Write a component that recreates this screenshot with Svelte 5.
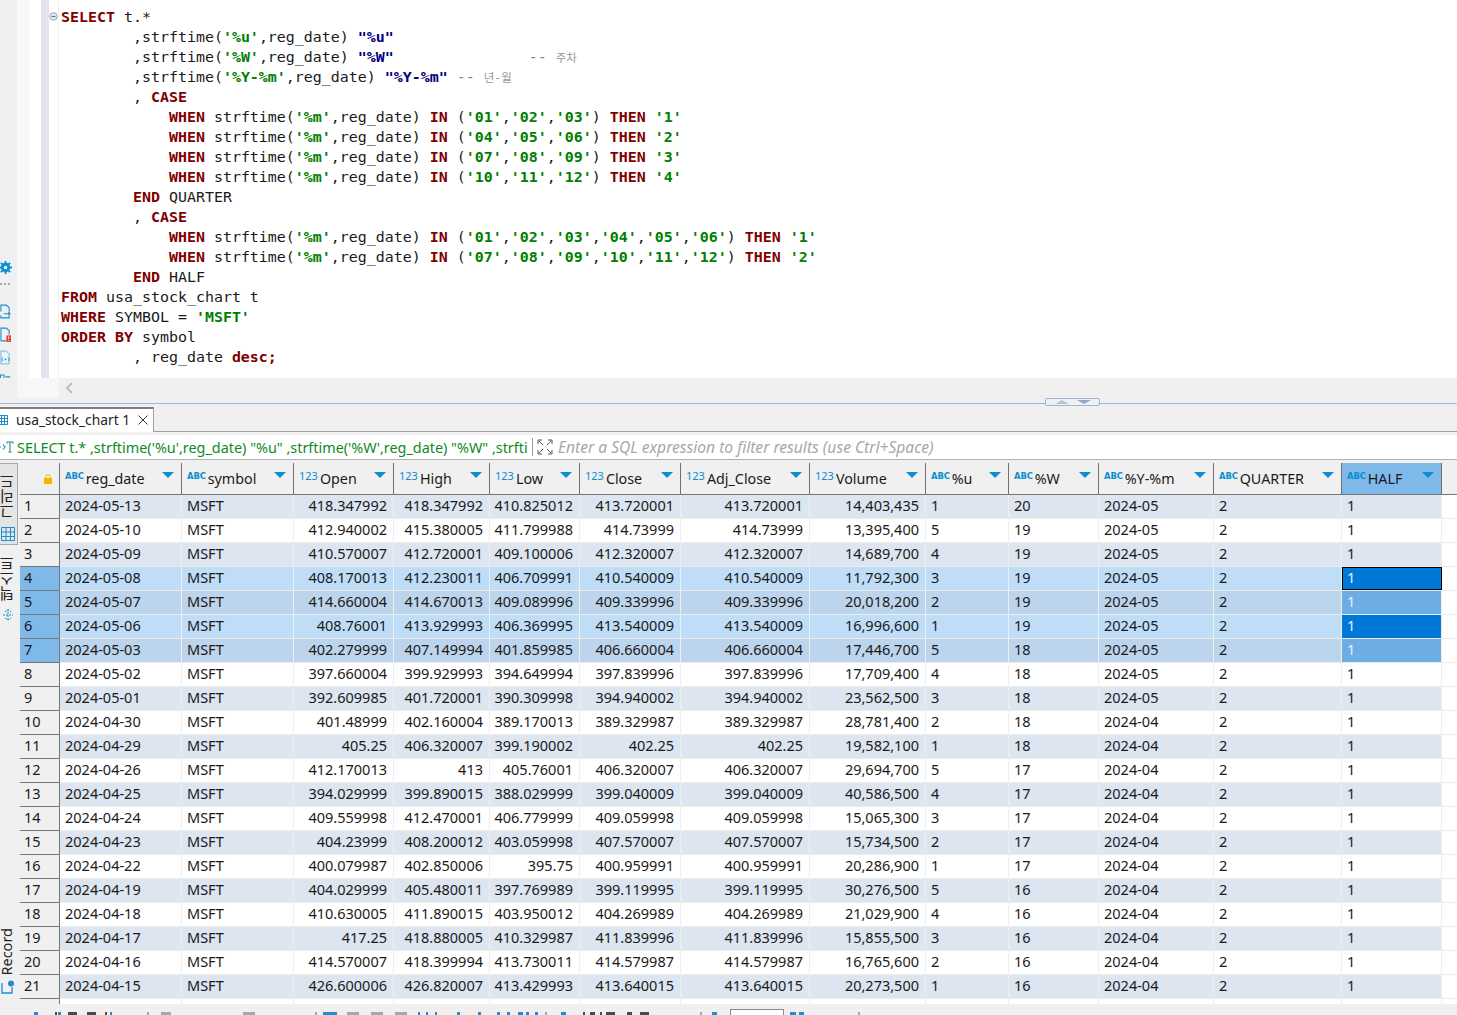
<script>
  const kw = (t) => ({ c: 'k', t });
  const st = (t) => ({ c: 's', t });
  const id = (t) => ({ c: 'i', t });
  const cm = (t) => ({ c: 'm', t });
  const ko = (t) => ({ c: 'ko', t });
  const tx = (t) => ({ c: 'n', t });

  const sf = (fmt, alias, rest) => [tx('        ,strftime('), st(`'${fmt}'`), tx(',reg_date) '), id(`"${alias}"`), ...(rest || [])];
  const when = (vals, n) => [
    tx('            '), kw('WHEN'), tx(' strftime('), st("'%m'"), tx(',reg_date) '), kw('IN'), tx(' ('),
    ...vals.flatMap((v, i) => (i ? [tx(','), st(`'${v}'`)] : [st(`'${v}'`)])),
    tx(') '), kw('THEN'), tx(' '), st(`'${n}'`)
  ];

  const code = [
    [kw('SELECT'), tx(' t.*')],
    sf('%u', '%u'),
    sf('%W', '%W', [tx('               '), cm('-- '), ko('주차')]),
    sf('%Y-%m', '%Y-%m', [tx(' '), cm('-- '), ko('년-월')]),
    [tx('        , '), kw('CASE')],
    when(['01', '02', '03'], 1),
    when(['04', '05', '06'], 2),
    when(['07', '08', '09'], 3),
    when(['10', '11', '12'], 4),
    [tx('        '), kw('END'), tx(' QUARTER')],
    [tx('        , '), kw('CASE')],
    when(['01', '02', '03', '04', '05', '06'], 1),
    when(['07', '08', '09', '10', '11', '12'], 2),
    [tx('        '), kw('END'), tx(' HALF')],
    [kw('FROM'), tx(' usa_stock_chart t')],
    [kw('WHERE'), tx(' SYMBOL = '), st("'MSFT'")],
    [kw('ORDER BY'), tx(' symbol')],
    [tx('        , reg_date '), kw('desc;')]
  ];

  const cols = [
    ['ABC', 'reg_date'], ['ABC', 'symbol'], ['123', 'Open'], ['123', 'High'], ['123', 'Low'],
    ['123', 'Close'], ['123', 'Adj_Close'], ['123', 'Volume'], ['ABC', '%u'], ['ABC', '%W'],
    ['ABC', '%Y-%m'], ['ABC', 'QUARTER'], ['ABC', 'HALF']
  ];

  const raw = `2024-05-13 418.347992 418.347992 410.825012 413.720001 413.720001 14,403,435 1 20 2024-05
2024-05-10 412.940002 415.380005 411.799988 414.73999 414.73999 13,395,400 5 19 2024-05
2024-05-09 410.570007 412.720001 409.100006 412.320007 412.320007 14,689,700 4 19 2024-05
2024-05-08 408.170013 412.230011 406.709991 410.540009 410.540009 11,792,300 3 19 2024-05
2024-05-07 414.660004 414.670013 409.089996 409.339996 409.339996 20,018,200 2 19 2024-05
2024-05-06 408.76001 413.929993 406.369995 413.540009 413.540009 16,996,600 1 19 2024-05
2024-05-03 402.279999 407.149994 401.859985 406.660004 406.660004 17,446,700 5 18 2024-05
2024-05-02 397.660004 399.929993 394.649994 397.839996 397.839996 17,709,400 4 18 2024-05
2024-05-01 392.609985 401.720001 390.309998 394.940002 394.940002 23,562,500 3 18 2024-05
2024-04-30 401.48999 402.160004 389.170013 389.329987 389.329987 28,781,400 2 18 2024-04
2024-04-29 405.25 406.320007 399.190002 402.25 402.25 19,582,100 1 18 2024-04
2024-04-26 412.170013 413 405.76001 406.320007 406.320007 29,694,700 5 17 2024-04
2024-04-25 394.029999 399.890015 388.029999 399.040009 399.040009 40,586,500 4 17 2024-04
2024-04-24 409.559998 412.470001 406.779999 409.059998 409.059998 15,065,300 3 17 2024-04
2024-04-23 404.23999 408.200012 403.059998 407.570007 407.570007 15,734,500 2 17 2024-04
2024-04-22 400.079987 402.850006 395.75 400.959991 400.959991 20,286,900 1 17 2024-04
2024-04-19 404.029999 405.480011 397.769989 399.119995 399.119995 30,276,500 5 16 2024-04
2024-04-18 410.630005 411.890015 403.950012 404.269989 404.269989 21,029,900 4 16 2024-04
2024-04-17 417.25 418.880005 410.329987 411.839996 411.839996 15,855,500 3 16 2024-04
2024-04-16 414.570007 418.399994 413.730011 414.579987 414.579987 16,765,600 2 16 2024-04
2024-04-15 426.600006 426.820007 413.429993 413.640015 413.640015 20,273,500 1 16 2024-04`;
  const rows = raw.split('\n').map((l) => l.split(' '));

  // tops of the bottom toolbar's icons, which the window cuts off: [x, width, colour]
  const B = '#1b8fd0', G = '#a8a8a8', D = '#4a4a4a';
  const marks = [
    [34, 4, B], [55, 2, D], [58, 3, B], [68, 9, D], [87, 9, D], [105, 2, D], [110, 2, B], [147, 2, G], [161, 10, G],
    [243, 12, G], [315, 2, G], [323, 14, B], [347, 12, G], [371, 12, G], [395, 12, G], [418, 2, B], [426, 2, B], [435, 2, B],
    [457, 3, B], [478, 3, B], [497, 3, B], [507, 3, B], [518, 5, B], [526, 3, B], [535, 3, B], [545, 2, G], [561, 5, B],
    [583, 2, D], [590, 5, D], [600, 2, D], [606, 9, D], [627, 5, D], [640, 9, D], [700, 2, G], [712, 5, B], [790, 6, B], [799, 5, B], [858, 2, G]
  ];
  const placed = marks.map((m, i) => ({ gap: i ? m[0] - marks[i - 1][0] - marks[i - 1][1] : m[0], w: m[1], col: m[2] }));
</script>

<div class="app">
  <section class="editor">
    <div class="rail">
      <svg class="gear" viewBox="0 0 14 14" width="13" height="13"><circle cx="7" cy="7" r="3.500" fill="none" stroke="#0a8fd6" stroke-width="3"/><path d="M7 0v3M7 11v3M0 7h3M11 7h3M2 2l2 2M10 10l2 2M12 2l-2 2M2 12l2-2" stroke="#0a8fd6" stroke-width="2"/></svg>
      <div class="dots"></div>
      <svg viewBox="0 0 12 16" width="11" height="15"><path d="M1 8V1h6l3 3v4M1 12v3h9v-2M4 10.500h7M9 8.500l2 2-2 2" fill="none" stroke="#1b8fd0" stroke-width="1.200"/></svg>
      <svg viewBox="0 0 12 16" width="11" height="15"><path d="M1 15V1h6l3 3v4M1 15h6" fill="none" stroke="#1b8fd0" stroke-width="1.200"/><rect x="7" y="9" width="5" height="7" fill="#e8392b"/><path d="M9.500 10v3M9.500 14v1" stroke="#fff"/></svg>
      <svg viewBox="0 0 12 16" width="11" height="15"><path d="M1 15V1h6l3 3v11z" fill="#eaf4fb" stroke="#6cb2df"/><path d="M3 8l-1 2 1 2M9 8l1 2-1 2" fill="none" stroke="#1b8fd0"/><circle cx="6" cy="10" r="1" fill="#1b8fd0"/></svg>
      <svg viewBox="0 0 12 16" width="11" height="15"><path d="M.5 2h4v4h-4zM.5 10h4v4h-4zM6 4h5M6 8h3M6 12h5" fill="none" stroke="#1b8fd0" stroke-width="1.200"/></svg>
    </div>
    <div class="strip-a"></div>
    <div class="strip-b"></div>
    <div class="strip-c">
      <svg class="fold" viewBox="0 0 9 9" width="9" height="9"><circle cx="4.500" cy="4.500" r="3.800" fill="#dfe5ec" stroke="#9aa9b8"/><path d="M2.500 4.500h4" stroke="#5f7287"/></svg>
    </div>
    <pre class="code">{#each code as line}<div class="ln">{#each line as p}<span class={p.c}>{p.t}</span>{/each}</div>{/each}</pre>
  </section>

  <div class="hscroll">
    <div class="hscroll-l"></div>
    <svg viewBox="0 0 8 12" width="8" height="12"><path d="M7 1L2 6l5 5" fill="none" stroke="#bdbdbd" stroke-width="2"/></svg>
  </div>

  <div class="sash"><div class="sash-h"><i class="up"></i><i class="down"></i></div></div>

  <div class="tabs">
    <div class="tab">
      <svg viewBox="0 0 12 12" width="12" height="12"><path d="M.5 1.500h9v9h-9zM.5 4.500h9M.5 7.500h9M3.500 1.500v9M6.500 1.500v9" fill="none" stroke="#1b8fd0"/></svg>
      <span>usa_stock_chart 1</span>
      <svg class="x" viewBox="0 0 10 10" width="10" height="10"><path d="M.5 .5l9 9M9.500 .5l-9 9" stroke="#333" stroke-width="1"/></svg>
    </div>
  </div>

  <div class="filter">
    <svg class="fi" viewBox="0 0 14 14" width="14" height="14"><path d="M0 7h1M3 4.500L5 7 3 9.500" fill="none" stroke="#1b8fd0" stroke-width="1.200"/><path d="M7 2h6M10 2v10M8.500 12h3M7 2v1.500M13 2v1.500" fill="none" stroke="#2a7f6f"/></svg>
    <span class="sql">SELECT t.* ,strftime('%u',reg_date) "%u" ,strftime('%W',reg_date) "%W" ,strfti</span>
    <span class="fsep"></span>
    <svg class="fexp" viewBox="0 0 16 16" width="16" height="16"><path d="M1 5V1h4M11 1h4v4M15 11v4h-4M5 15H1v-4M2 2l4 4M14 2l-4 4M2 14l4-4M14 14l-4-4" fill="none" stroke="#555"/></svg>
    <span class="ph">Enter a SQL expression to filter results (use Ctrl+Space)</span>
  </div>

  <div class="results">
    <div class="side">
      <div class="vtab on">
        <span class="vt">그리드</span>
        <svg viewBox="0 0 14 14" width="14" height="14"><path d="M.5 .5h13v13H.5zM.5 5h13M.5 9.500h13M5 .5v13M9.500 .5v13" fill="none" stroke="#1b8fd0"/></svg>
      </div>
      <div class="vtab second">
        <span class="vt">텍스트</span>
        <svg viewBox="0 0 12 12" width="12" height="12"><path d="M6 0v12M3 3l3-2 3 2M3 9l3 2 3-2M1 6h10" fill="none" stroke="#1b8fd0" stroke-dasharray="2 1"/></svg>
      </div>
      <div class="vtab rec">
        <span class="vt en">Record</span>
        <svg viewBox="0 0 14 14" width="14" height="14"><path d="M1 3v10h10V7" fill="none" stroke="#1b8fd0" stroke-width="1.300"/><circle cx="10" cy="3.500" r="3" fill="#1b8fd0"/></svg>
      </div>
    </div>

    <div class="table">
      <div class="row head">
        <div class="rh corner"><svg viewBox="0 0 8 10" width="8" height="10"><rect y="4" width="8" height="6" fill="#f5b400"/><path d="M2 4V2.500a2 2 0 0 1 4 0V4" fill="none" stroke="#f5b400"/></svg></div>
        {#each cols as c, i}
          <div class="hc" class:hsel={i === 12}>
            <span class={c[0] === 'ABC' ? 'abc' : 'num'}>{c[0]}</span>
            <span class="lbl">{c[1]}</span>
            <i class="tri"></i>
          </div>
        {/each}
        <div class="hrest"></div>
      </div>
      {#each rows as r, i}
        <div class="row" class:odd={i % 2 === 0} class:sel={i >= 3 && i <= 6}>
          <div class="rh">{i + 1}</div>
          <div class="c">{r[0]}</div>
          <div class="c">MSFT</div>
          <div class="c r">{r[1]}</div>
          <div class="c r">{r[2]}</div>
          <div class="c r">{r[3]}</div>
          <div class="c r">{r[4]}</div>
          <div class="c r">{r[5]}</div>
          <div class="c r">{r[6]}</div>
          <div class="c">{r[7]}</div>
          <div class="c">{r[8]}</div>
          <div class="c">{r[9]}</div>
          <div class="c">2</div>
          <div class="c half" class:cur={i === 3} class:strong={i === 5} class:soft={i === 4 || i === 6}>1</div>
          <div class="rest"></div>
        </div>
      {/each}
      <div class="row tail">
        <div class="rh"></div>
        {#each cols as _}<div class="c"></div>{/each}
        <div class="rest"></div>
      </div>
    </div>
  </div>

  <div class="footer">
    <div class="box"></div>
    {#each placed as m}<i class="mark" style="margin-left:{m.gap}px;width:{m.w}px;background:{m.col}"></i>{/each}
  </div>
</div>

<style>
  :global(body) {
    margin: 0;
    background: #f0f0f0;
    overflow: hidden;
  }
  .app {
    width: 1457px;
    height: 1015px;
    display: flex;
    flex-direction: column;
    overflow: hidden;
    background: #f0f0f0;
    font-family: "Noto Sans", "Noto Sans CJK KR", sans-serif;
    color: #1a1a1a;
  }
  .editor {
    height: 378px;
    display: flex;
    flex: none;
    background: #fff;
  }
  .rail {
    width: 17px;
    flex: none;
    background: #f0f0f0;
    display: flex;
    flex-direction: column;
    align-items: flex-start;
    padding-top: 261px;
    box-sizing: border-box;
  }
  .rail svg { margin-bottom: 8px; flex: none; }
  .rail .gear { margin-left: -1px; margin-bottom: 9px; }
  .dots {
    width: 10px;
    margin: 0 0 19px 0;
    border-top: 2px dotted #aaa;
  }
  .strip-a { width: 12px; flex: none; background: #f8f8f8; }
  .strip-b { width: 12px; flex: none; background: #fff; }
  .strip-c {
    width: 18px;
    flex: none;
    box-sizing: border-box;
    background: linear-gradient(90deg, #e3e3f0 8px, #fff 8px);
    border-right: 1px solid #f0f0f0;
    padding: 12px 0 0 8px;
  }
  .fold { display: block; }
  .code {
    margin: 0;
    padding: 7px 0 0 2px;
    font-family: "DejaVu Sans Mono", "Noto Sans CJK KR", monospace;
    font-size: 14.950px;
    line-height: 20px;
    color: #1a1a1a;
  }
  .ln { height: 20px; white-space: pre; }
  .k { color: #7f0000; font-weight: bold; }
  .s { color: #008000; font-weight: bold; }
  .i { color: #000080; font-weight: bold; }
  .m { color: #808080; }
  .ko { color: #999; font-size: 11.500px; }

  .hscroll {
    height: 20px;
    flex: none;
    display: flex;
    align-items: center;
    gap: 6px;
    background: #f0f0f0;
  }
  .hscroll-l {
    width: 59px;
    height: 20px;
    background: linear-gradient(90deg, #f0f0f0 17px, #f7f7f7 17px);
  }
  .sash {
    position: relative;
    height: 5px;
    flex: none;
    border-bottom: 1px solid #9db7d6;
    margin-bottom: 3px;
  }
  .sash-h {
    position: absolute;
    left: 1045px;
    top: 0;
    width: 55px;
    height: 8px;
    box-sizing: border-box;
    background: #f0f0f0;
    border: 1px solid #9db7d6;
    border-radius: 2px;
    display: flex;
    justify-content: center;
    align-items: center;
    gap: 8px;
  }
  .up, .down { display: block; width: 0; height: 0; border-left: 7px solid transparent; border-right: 7px solid transparent; }
  .up { border-bottom: 4px solid #b4c4d6; }
  .down { border-top: 4px solid #90a8c4; }

  .tabs {
    height: 25px;
    flex: none;
    box-sizing: border-box;
    border-bottom: 1px solid #a0a0a0;
    display: flex;
  }
  .tab {
    width: 154px;
    height: 25px;
    box-sizing: border-box;
    background: #fff;
    border-top: 2px solid #808080;
    border-right: 1px solid #a0a0a0;
    padding-bottom: 2px;
    display: flex;
    align-items: center;
    font-size: 13.800px;
    color: #222;
  }
  .tab svg { margin-left: -2px; flex: none; }
  .tab span { margin-left: 6px; white-space: nowrap; }
  .tab .x { margin-left: 8px; }

  .filter {
    height: 25px;
    flex: none;
    margin-top: 3px;
    box-sizing: border-box;
    display: flex;
    align-items: center;
    background: #fff;
    border-bottom: 1px solid #b0b0b0;
    overflow: hidden;
    font-size: 14.400px;
  }
  .fi { flex: none; margin-right: 3px; }
  .sql {
    width: 513px;
    flex: none;
    color: #0f8a1f;
    white-space: nowrap;
    overflow: hidden;
  }
  .fsep { width: 1px; height: 18px; background: #999; margin-left: 2px; flex: none; }
  .fexp { margin-left: 4px; flex: none; }
  .ph { margin-left: 5px; color: #a8a8a8; font-style: italic; white-space: nowrap; font-size: 15.600px; }

  .results {
    display: flex;
    height: 541px;
    flex: none;
    margin-top: 3px;
    overflow: hidden;
  }
  .side {
    width: 20px;
    flex: none;
    display: flex;
    flex-direction: column;
    overflow: hidden;
  }
  .vtab {
    width: 18px;
    box-sizing: border-box;
    display: flex;
    flex-direction: column;
    align-items: center;
    overflow: hidden;
    gap: 8px;
    padding-top: 10px;
  }
  .vtab.on {
    height: 82px;
    background: #e4e4e4;
    border: 1px solid #a8a8a8;
    border-left: 0;
    flex: none;
  }
  .vtab.second { padding-top: 11px; }
  .vtab.rec { margin-top: auto; padding-bottom: 10px; gap: 4px; }
  .vt {
    writing-mode: vertical-rl;
    transform: rotate(180deg);
    font-size: 15px;
    line-height: 18px;
    color: #222;
    white-space: nowrap;
    margin-left: -4px;
  }
  .vt.en { margin-left: -5px; line-height: 15px; font-size: 14.500px; }
  .vtab svg { flex: none; margin-left: -2px; }

  .table {
    flex: 1;
    min-width: 0;
    background: #fff;
    font-size: 14.500px;
  }
  .row {
    display: grid;
    grid-template-columns: 40px 122px 112px 100px 96px 90px 101px 129px 116px 83px 90px 115px 128px 100px 1fr;
    height: 24px;
    box-sizing: border-box;
    border-bottom: 1px solid #ececec;
    line-height: 21px;
    color: #1a1a1a;
  }
  .row.head {
    height: 32px;
    background: #f0f0f0;
    border-bottom: 1px solid #777;
  }
  .rh {
    background: #f0f0f0;
    box-shadow: 0 1px 0 #777;
    border-right: 1px solid #777;
    padding-left: 4px;
    box-sizing: border-box;
  }
  .row.sel .rh { background: #7eb9ea; }
  .corner {
    box-shadow: none;
    display: flex;
    align-items: center;
    justify-content: flex-end;
    padding-right: 7px;
  }
  .hc {
    position: relative;
    box-sizing: border-box;
    border-right: 1px solid #6f6f6f;
    padding-left: 5px;
    display: flex;
    align-items: center;
    white-space: nowrap;
    overflow: hidden;
    font-size: 14.300px;
  }
  .hsel { background: #7eb9ea; }
  .abc {
    font-size: 8.500px;
    font-weight: 900;
    color: #0a8ed0;
    letter-spacing: -0.200px;
    margin-right: 2px;
    margin-top: -5px;
    line-height: 10px;
    font-family: "DejaVu Sans", sans-serif;
  }
  .num {
    font-size: 11px;
    color: #0a8ed0;
    margin-right: 2px;
    margin-top: -5px;
    line-height: 12px;
  }
  .tri {
    position: absolute;
    right: 7px;
    top: 9px;
    width: 0;
    height: 0;
    border-left: 6px solid transparent;
    border-right: 6px solid transparent;
    border-top: 6px solid #0a8ed0;
  }
  .c {
    box-sizing: border-box;
    border-right: 1px solid #eee;
    padding-left: 5px;
    white-space: nowrap;
    overflow: hidden;
  }
  .c.r { text-align: right; padding: 0 6px 0 0; }
  .rest { background: #fff; }
  .hrest { background: #f0f0f0; }
  .row.odd .c { background: #dce5f0; }
  .row.sel .c { background: #bfddf6; }
  .row.sel.odd .c { background: #bcd4ec; }
  .row .c.half.cur, .row.sel .c.half.strong { background: #0078d7; color: #e8f2fb; }
  .row.sel .c.half.soft { background: #6cade4; color: #e8f2fb; }
  .row .c.half.cur { outline: 1px solid #000; outline-offset: -1px; }
  .row.tail { border-bottom: 0; height: 6px; }

  .footer {
    flex: 1;
    position: relative;
    display: flex;
    align-items: flex-end;
    background: #f0f0f0;
  }
  .mark { display: block; height: 3px; flex: none; }
  .box {
    position: absolute;
    left: 730px;
    top: 5px;
    width: 54px;
    height: 12px;
    box-sizing: border-box;
    background: #fff;
    border: 1px solid #888;
  }
</style>
